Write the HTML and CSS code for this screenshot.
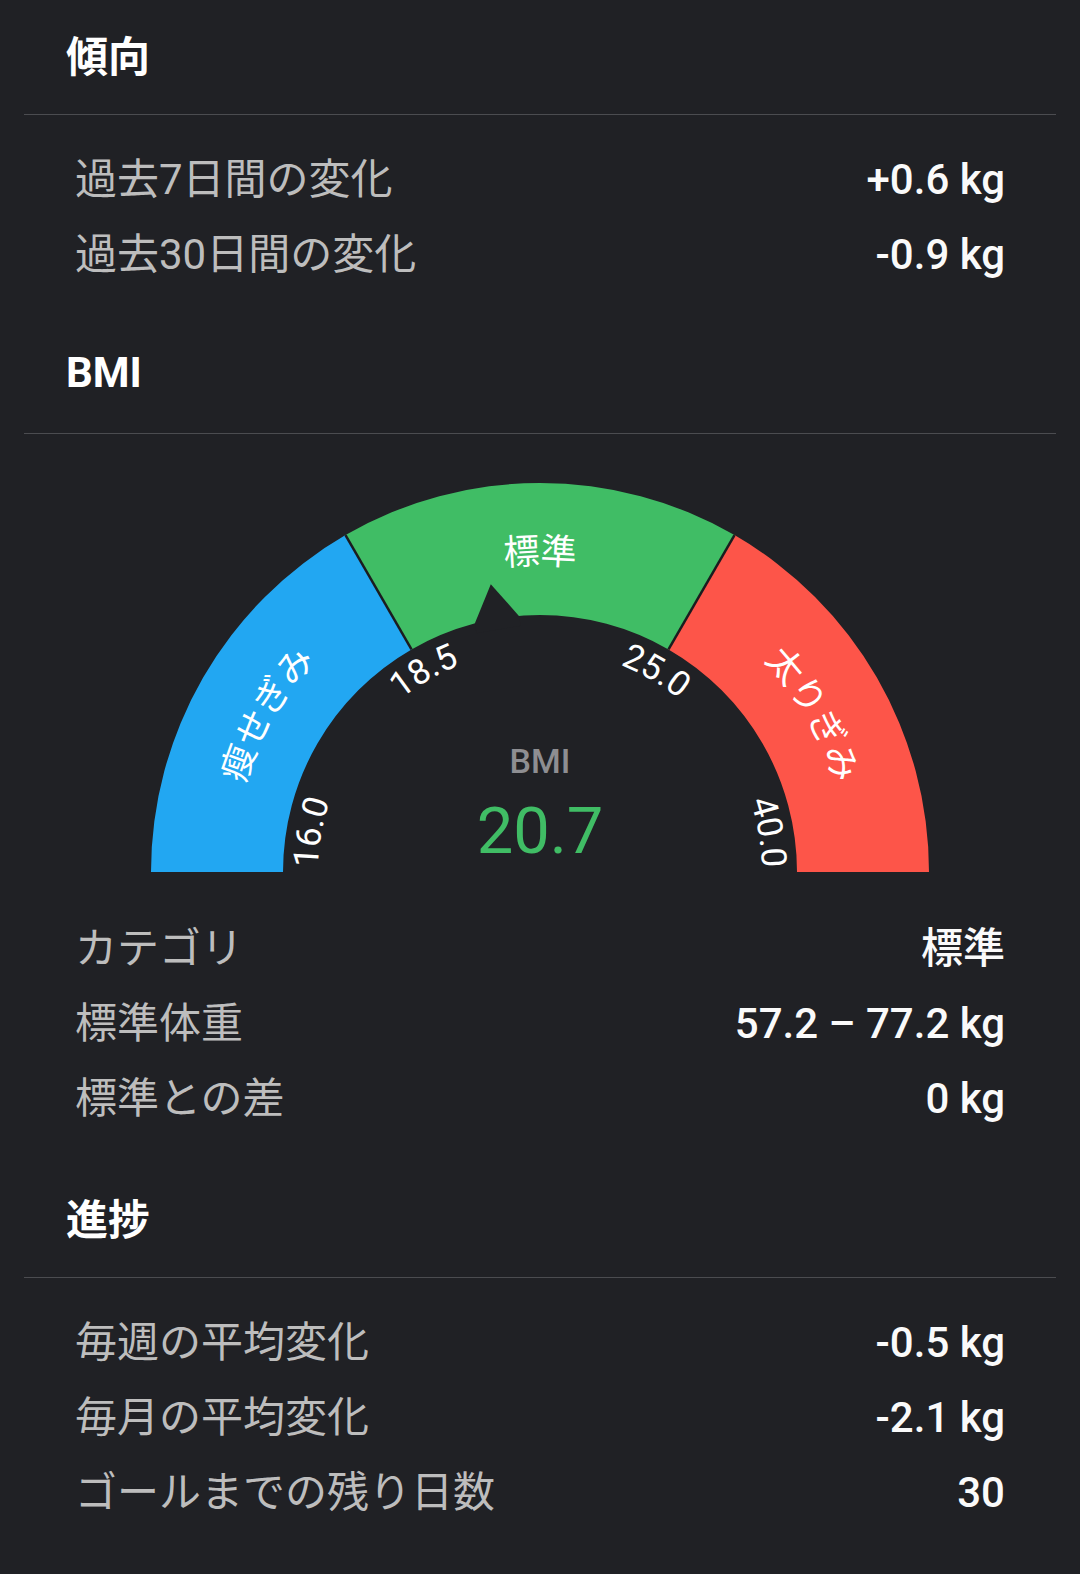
FILE: index.html
```html
<!DOCTYPE html>
<html lang="ja">
<head>
    <meta charset="UTF-8">
    <meta name="viewport" content="width=device-width, initial-scale=1.0">
    <title>体重の傾向</title>
    <link rel="stylesheet" href="styles.css">
</head>
<body>
    <div class="page">
        <section class="section">
            <h2 class="section-title">傾向</h2>
            <div class="rows">
                <div class="row"><span class="label">過去7日間の変化</span><span class="value">+0.6 kg</span></div>
                <div class="row"><span class="label">過去30日間の変化</span><span class="value">-0.9 kg</span></div>
            </div>
        </section>

        <section class="section">
            <h2 class="section-title">BMI</h2>
            <div class="rows">
                <svg class="gauge" viewBox="-516 -412 1032 450">
                    <defs>
                        <path id="num-arc" d="M -222 0 A 222 222 0 0 1 222 0"/>
                        <path id="seg-arc" d="M -308 0 A 308 308 0 0 1 308 0"/>
                    </defs>
                    <path class="seg-under" d="M -389 0 A 389 389 0 0 1 -194.5 -336.88 L -128.5 -222.57 A 257 257 0 0 0 -257 0 Z"/>
                    <path class="seg-normal" d="M -194.5 -336.88 A 389 389 0 0 1 194.5 -336.88 L 128.5 -222.57 A 257 257 0 0 0 -128.5 -222.57 Z"/>
                    <path class="seg-over" d="M 194.5 -336.88 A 389 389 0 0 1 389 0 L 257 0 A 257 257 0 0 0 128.5 -222.57 Z"/>
                    <line class="seg-gap" x1="-128.5" y1="-222.57" x2="-194.5" y2="-336.88"/>
                    <line class="seg-gap" x1="128.5" y1="-222.57" x2="194.5" y2="-336.88"/>
                    <polygon class="pointer" points="-22.4,-246 -22.4,-256 0,-292 22.4,-256 22.4,-246" transform="rotate(-9.7)"/>

                    <text class="gauge-seg"><textPath href="#seg-arc" startOffset="16.67%" text-anchor="middle">瘦せぎみ</textPath></text>
                    <text class="gauge-seg"><textPath href="#seg-arc" startOffset="50%" text-anchor="middle">標準</textPath></text>
                    <text class="gauge-seg"><textPath href="#seg-arc" startOffset="83.33%" text-anchor="middle">太りぎみ</textPath></text>

                    <text class="gauge-num"><textPath href="#num-arc" startOffset="0.6%">16.0</textPath></text>
                    <text class="gauge-num"><textPath href="#num-arc" startOffset="33.33%" text-anchor="middle">18.5</textPath></text>
                    <text class="gauge-num"><textPath href="#num-arc" startOffset="66.67%" text-anchor="middle">25.0</textPath></text>
                    <text class="gauge-num"><textPath href="#num-arc" startOffset="99.4%" text-anchor="end">40.0</textPath></text>

                    <text class="gauge-title" x="0" y="-99" text-anchor="middle">BMI</text>
                    <text class="gauge-value" x="0" y="-19" text-anchor="middle">20.7</text>
                </svg>
                <div class="row"><span class="label">カテゴリ</span><span class="value">標準</span></div>
                <div class="row"><span class="label">標準体重</span><span class="value">57.2 – 77.2 kg</span></div>
                <div class="row"><span class="label">標準との差</span><span class="value">0 kg</span></div>
            </div>
        </section>

        <section class="section">
            <h2 class="section-title">進捗</h2>
            <div class="rows">
                <div class="row"><span class="label">毎週の平均変化</span><span class="value">-0.5 kg</span></div>
                <div class="row"><span class="label">毎月の平均変化</span><span class="value">-2.1 kg</span></div>
                <div class="row"><span class="label">ゴールまでの残り日数</span><span class="value">30</span></div>
            </div>
        </section>
    </div>
</body>
</html>
```

FILE: styles.css
```css
body {
    margin: 0;
    background-color: #202125;
    font-family: Roboto, "Noto Sans CJK JP", sans-serif;
    color: #fff;
}

.page {
    padding: 0 24px;
}

.section {
    padding-bottom: 28px;
}

.section-title {
    box-sizing: border-box;
    height: 115px;
    margin: 0;
    padding: 0 42px 7px;
    display: flex;
    align-items: center;
    border-bottom: 1px solid #4b4c50;
    font-size: 42px;
    font-weight: 700;
    color: #fff;
}

.rows {
    padding-top: 26px;
}

.row {
    box-sizing: border-box;
    height: 75px;
    padding: 4px 51px 0;
    display: flex;
    justify-content: space-between;
    align-items: center;
    line-height: 1.2;
}

.label {
    font-size: 42px;
    color: #bdbdbd;
}

.value {
    font-size: 42px;
    font-weight: 500;
    color: #fafafa;
}

.gauge {
    display: block;
    width: 1032px;
    height: 450px;
}

.seg-under {
    fill: #22a7f2;
}

.seg-normal {
    fill: #40bd65;
}

.seg-over {
    fill: #fd5549;
}

.seg-gap {
    stroke: #1b1c1f;
    stroke-width: 2.5;
}

.pointer {
    fill: #202125;
}

.gauge-seg {
    font-family: "Noto Sans CJK JP", sans-serif;
    font-size: 36px;
    fill: #fff;
}

.gauge-num {
    font-family: Roboto, sans-serif;
    font-size: 35px;
    fill: #fff;
}

.gauge-title {
    font-family: Roboto, sans-serif;
    font-size: 34px;
    font-weight: 500;
    fill: #8e8e92;
}

.gauge-value {
    font-family: Roboto, sans-serif;
    font-size: 65px;
    fill: #40bd65;
}
```
